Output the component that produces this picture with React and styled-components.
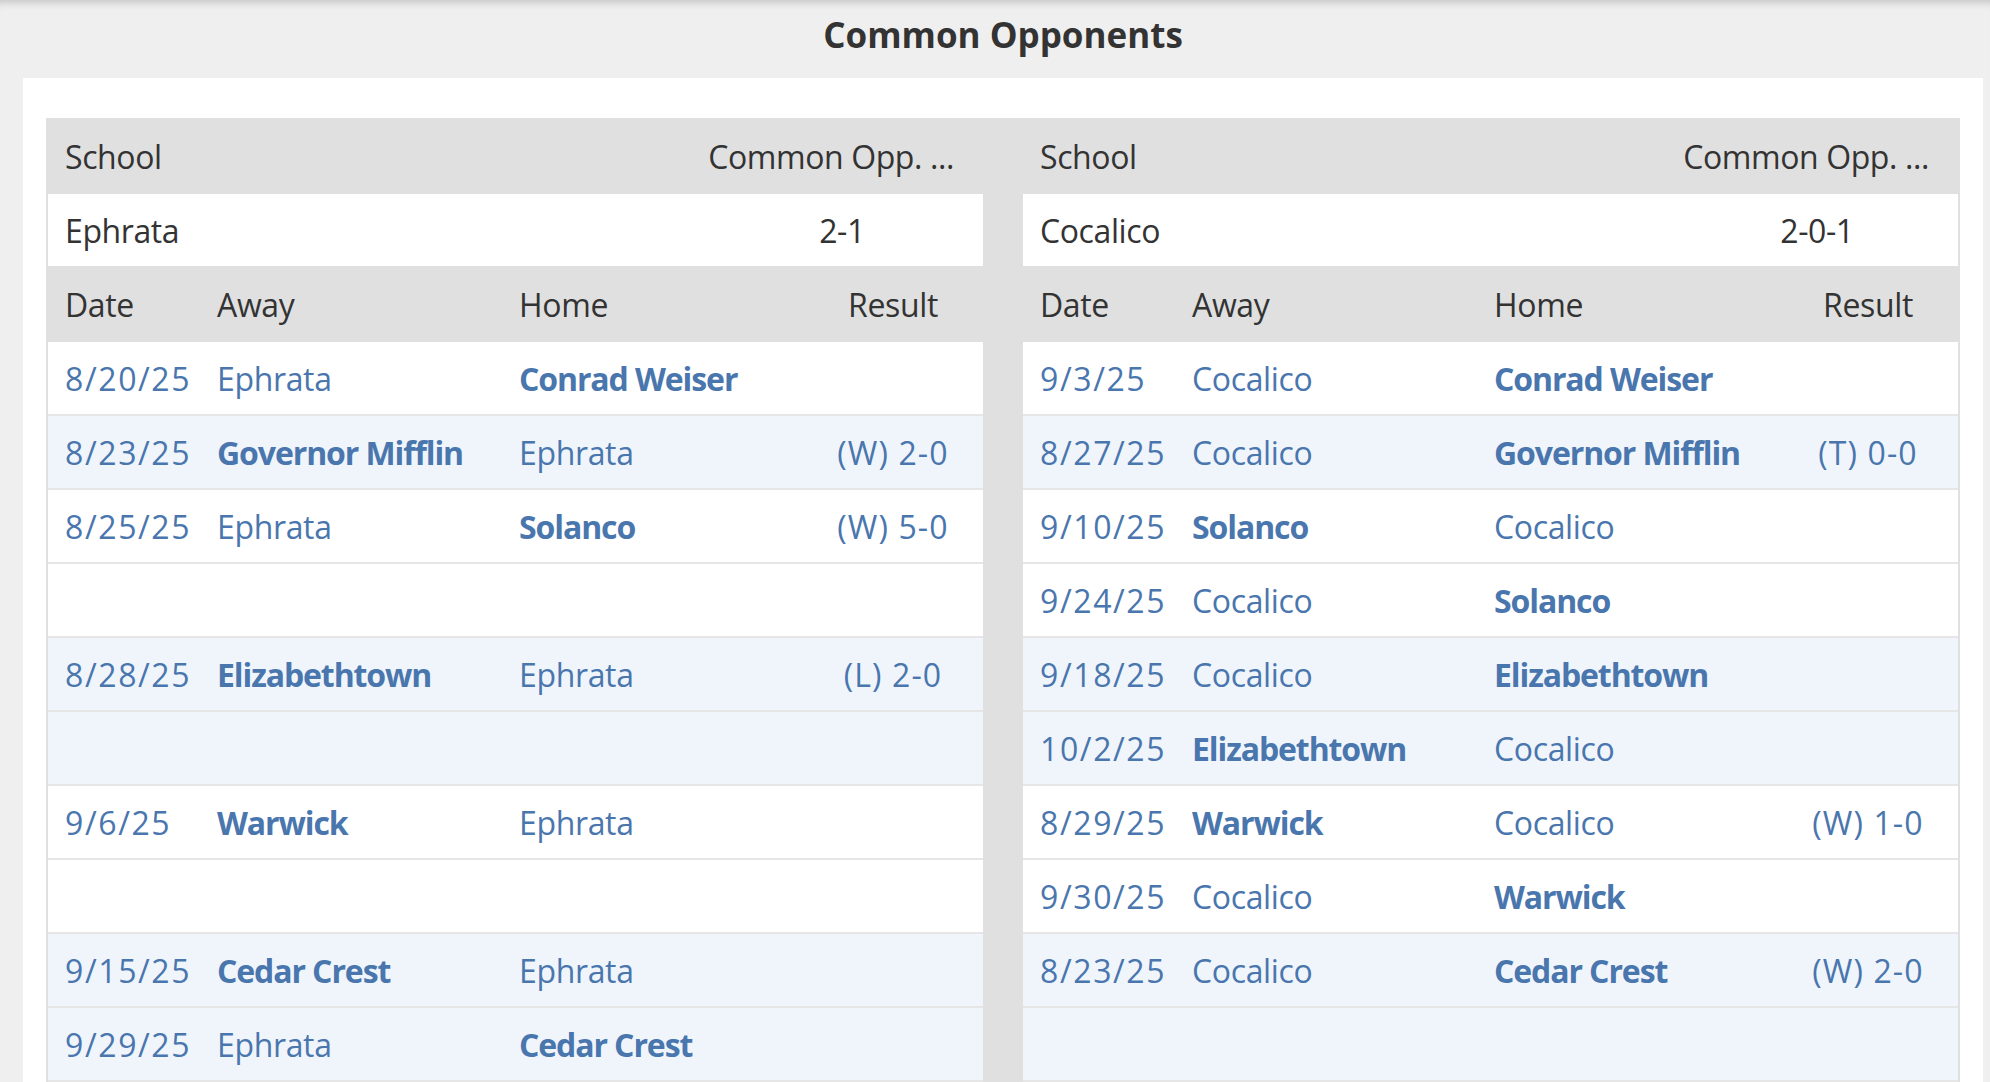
import styled, { createGlobalStyle } from 'styled-components'

const Global = createGlobalStyle`
  html, body {
    margin: 0;
    padding: 0;
    overflow: hidden;
    background: #efefef;
  }
  * { box-sizing: border-box; }
`

const Page = styled.div`
  min-height: 100vh;
  background: #efefef;
  padding: 0 7px 0 23px;
  box-shadow: inset 0 9px 8px -7px rgba(0, 0, 0, 0.2);
  font-family: "Open Sans", "Noto Sans", sans-serif;
`

const Title = styled.h1`
  margin: 0;
  height: 78px;
  padding-top: 17px;
  font-size: 35px;
  line-height: 1;
  font-weight: 700;
  color: #333;
  text-align: center;
`

const Card = styled.div`
  background: #fff;
  padding: 40px 23px 0;
`

const Board = styled.div`
  display: grid;
  grid-template-columns: 935px 935px;
  column-gap: 40px;
  background: #e0e0e0;
  padding: 0 2px;
`

const Panel = styled.div`
  display: flex;
  flex-direction: column;
`

const SummaryRow = styled.div`
  display: grid;
  grid-template-columns: 1fr 282px;
  height: ${p => (p.$head ? '76px' : '72px')};
  background: ${p => (p.$head ? '#e0e0e0' : '#fff')};
  color: #333;
  font-size: 32px;
  letter-spacing: -0.4px;
`

const SummaryCell = styled.div`
  display: flex;
  align-items: center;
  padding: 0 17px;
  white-space: nowrap;
  justify-content: ${p => p.$align || 'flex-start'};
  padding-right: ${p => (p.$align === 'flex-end' ? '29px' : '17px')};
`

const GameRow = styled.div`
  display: grid;
  grid-template-columns: 152px 302px 301px 180px;
  height: ${p => (p.$head ? '76px' : '74px')};
  background: ${p => (p.$head ? '#e0e0e0' : p.$shade ? '#f0f5fc' : '#fff')};
  border-bottom: ${p => (p.$head ? 'none' : '2px solid #e6e6e6')};
  color: ${p => (p.$head ? '#333' : '#4a76ae')};
  font-size: 32px;
`

const spacing = p => {
  if (p.$bold) return '-1.1px'
  if (p.$kind === 'date') return '1.6px'
  if (p.$kind === 'result') return '1.1px'
  return '-0.35px'
}

const Cell = styled.div`
  display: flex;
  align-items: center;
  padding: 0 17px;
  white-space: nowrap;
  justify-content: ${p => (p.$center ? 'center' : 'flex-start')};
  font-weight: ${p => (p.$bold ? 700 : 400)};
  letter-spacing: ${spacing};
`

const left = {
  school: 'Ephrata',
  record: '2-1',
  games: [
    { date: '8/20/25', away: 'Ephrata', home: 'Conrad Weiser', bold: 'home', shade: false },
    { date: '8/23/25', away: 'Governor Mifflin', home: 'Ephrata', bold: 'away', result: '(W) 2-0', shade: true },
    { date: '8/25/25', away: 'Ephrata', home: 'Solanco', bold: 'home', result: '(W) 5-0', shade: false },
    { shade: false },
    { date: '8/28/25', away: 'Elizabethtown', home: 'Ephrata', bold: 'away', result: '(L) 2-0', shade: true },
    { shade: true },
    { date: '9/6/25', away: 'Warwick', home: 'Ephrata', bold: 'away', shade: false },
    { shade: false },
    { date: '9/15/25', away: 'Cedar Crest', home: 'Ephrata', bold: 'away', shade: true },
    { date: '9/29/25', away: 'Ephrata', home: 'Cedar Crest', bold: 'home', shade: true },
  ],
}

const right = {
  school: 'Cocalico',
  record: '2-0-1',
  games: [
    { date: '9/3/25', away: 'Cocalico', home: 'Conrad Weiser', bold: 'home', shade: false },
    { date: '8/27/25', away: 'Cocalico', home: 'Governor Mifflin', bold: 'home', result: '(T) 0-0', shade: true },
    { date: '9/10/25', away: 'Solanco', home: 'Cocalico', bold: 'away', shade: false },
    { date: '9/24/25', away: 'Cocalico', home: 'Solanco', bold: 'home', shade: false },
    { date: '9/18/25', away: 'Cocalico', home: 'Elizabethtown', bold: 'home', shade: true },
    { date: '10/2/25', away: 'Elizabethtown', home: 'Cocalico', bold: 'away', shade: true },
    { date: '8/29/25', away: 'Warwick', home: 'Cocalico', bold: 'away', result: '(W) 1-0', shade: false },
    { date: '9/30/25', away: 'Cocalico', home: 'Warwick', bold: 'home', shade: false },
    { date: '8/23/25', away: 'Cocalico', home: 'Cedar Crest', bold: 'home', result: '(W) 2-0', shade: true },
    { shade: true },
  ],
}

function SchoolPanel({ data }) {
  return (
    <Panel>
      <SummaryRow $head>
        <SummaryCell>School</SummaryCell>
        <SummaryCell $align="flex-end">Common Opp. ...</SummaryCell>
      </SummaryRow>
      <SummaryRow>
        <SummaryCell>{data.school}</SummaryCell>
        <SummaryCell $align="center">{data.record}</SummaryCell>
      </SummaryRow>
      <GameRow $head>
        <Cell>Date</Cell>
        <Cell>Away</Cell>
        <Cell>Home</Cell>
        <Cell $center>Result</Cell>
      </GameRow>
      {data.games.map((g, i) => (
        <GameRow key={i} $shade={g.shade}>
          <Cell $kind="date">{g.date}</Cell>
          <Cell $bold={g.bold === 'away'}>{g.away}</Cell>
          <Cell $bold={g.bold === 'home'}>{g.home}</Cell>
          <Cell $center $kind="result">{g.result}</Cell>
        </GameRow>
      ))}
    </Panel>
  )
}

export default function App() {
  return (
    <Page>
      <Global />
      <Title>Common Opponents</Title>
      <Card>
        <Board>
          <SchoolPanel data={left} />
          <SchoolPanel data={right} />
        </Board>
      </Card>
    </Page>
  )
}
